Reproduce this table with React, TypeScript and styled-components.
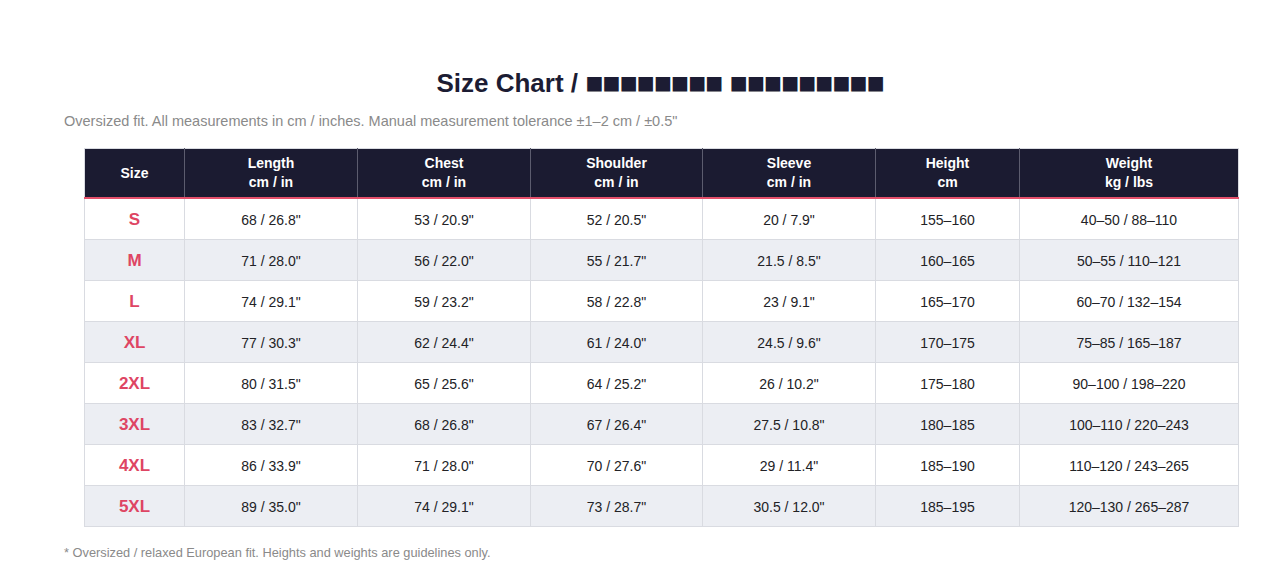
import React from "react";
import styled, { createGlobalStyle } from "styled-components";

const Global = createGlobalStyle`
  html, body { margin: 0; padding: 0; background: #ffffff; }
  body { font-family: "Liberation Sans", Arial, Helvetica, sans-serif; }
`;

const Page = styled.div`
  width: 1280px;
  box-sizing: border-box;
  padding: 67px 24px 0 64px;
`;

const Title = styled.h1`
  margin: 0;
  text-align: center;
  font-size: 26px;
  line-height: 32px;
  height: 32px;
  font-weight: 700;
  color: #1c1c33;
`;

const Boxes = styled.span`
  font-size: 30px;
  line-height: 0;
  letter-spacing: -1px;
  vertical-align: -1px;
`;

const Subtitle = styled.p`
  margin: 13px 0 0 0;
  font-size: 14.5px;
  line-height: 18px;
  color: #8a8a8a;
`;

const Table = styled.table`
  margin: 18px 0 0 20px;
  width: 1154px;
  border-collapse: collapse;
  table-layout: fixed;
  border: 1px solid #d9dbe1;
`;

const HeadCell = styled.th`
  background: #1b1b31;
  color: #ffffff;
  font-size: 14px;
  line-height: 19px;
  font-weight: 700;
  text-align: center;
  height: 48px;
  padding: 0;
  border-left: 1px solid #5c5c6e;
  border-bottom: 2px solid #e4506b;
  &:first-child { border-left: none; }
`;

const Row = styled.tr<{ $alt: boolean }>`
  background: ${(p) => (p.$alt ? "#eceef3" : "#ffffff")};
`;

const Cell = styled.td`
  height: 39px;
  padding: 1px 0 0 0;
  text-align: center;
  font-size: 14px;
  color: #222226;
  border: 1px solid #d9dbe1;
`;

const SizeCell = styled(Cell)`
  font-size: 17px;
  font-weight: 700;
  color: #de4563;
`;

const Footnote = styled.p`
  margin: 18px 0 0 0;
  font-size: 12.8px;
  line-height: 16px;
  color: #8a8a8a;
`;

const cols = [100, 173, 173, 172, 173, 144, 219];

const headers: [string, string | null][] = [
  ["Size", null],
  ["Length", "cm / in"],
  ["Chest", "cm / in"],
  ["Shoulder", "cm / in"],
  ["Sleeve", "cm / in"],
  ["Height", "cm"],
  ["Weight", "kg / lbs"],
];

const rows: string[][] = [
  ["S", '68 / 26.8"', '53 / 20.9"', '52 / 20.5"', '20 / 7.9"', "155–160", "40–50 / 88–110"],
  ["M", '71 / 28.0"', '56 / 22.0"', '55 / 21.7"', '21.5 / 8.5"', "160–165", "50–55 / 110–121"],
  ["L", '74 / 29.1"', '59 / 23.2"', '58 / 22.8"', '23 / 9.1"', "165–170", "60–70 / 132–154"],
  ["XL", '77 / 30.3"', '62 / 24.4"', '61 / 24.0"', '24.5 / 9.6"', "170–175", "75–85 / 165–187"],
  ["2XL", '80 / 31.5"', '65 / 25.6"', '64 / 25.2"', '26 / 10.2"', "175–180", "90–100 / 198–220"],
  ["3XL", '83 / 32.7"', '68 / 26.8"', '67 / 26.4"', '27.5 / 10.8"', "180–185", "100–110 / 220–243"],
  ["4XL", '86 / 33.9"', '71 / 28.0"', '70 / 27.6"', '29 / 11.4"', "185–190", "110–120 / 243–265"],
  ["5XL", '89 / 35.0"', '74 / 29.1"', '73 / 28.7"', '30.5 / 12.0"', "185–195", "120–130 / 265–287"],
];

export default function App() {
  return (
    <>
      <Global />
      <Page>
        <Title>
          Size Chart / <Boxes>■■■■■■■■ ■■■■■■■■■</Boxes>
        </Title>
        <Subtitle>
          Oversized fit. All measurements in cm / inches. Manual measurement tolerance ±1–2 cm / ±0.5"
        </Subtitle>
        <Table>
          <colgroup>
            {cols.map((w, i) => (
              <col key={i} style={{ width: w }} />
            ))}
          </colgroup>
          <thead>
            <tr>
              {headers.map(([a, b]) => (
                <HeadCell key={a}>
                  {a}
                  {b && (
                    <>
                      <br />
                      {b}
                    </>
                  )}
                </HeadCell>
              ))}
            </tr>
          </thead>
          <tbody>
            {rows.map((r, i) => (
              <Row key={r[0]} $alt={i % 2 === 1}>
                <SizeCell>{r[0]}</SizeCell>
                {r.slice(1).map((c, j) => (
                  <Cell key={j}>{c}</Cell>
                ))}
              </Row>
            ))}
          </tbody>
        </Table>
        <Footnote>* Oversized / relaxed European fit. Heights and weights are guidelines only.</Footnote>
      </Page>
    </>
  );
}
